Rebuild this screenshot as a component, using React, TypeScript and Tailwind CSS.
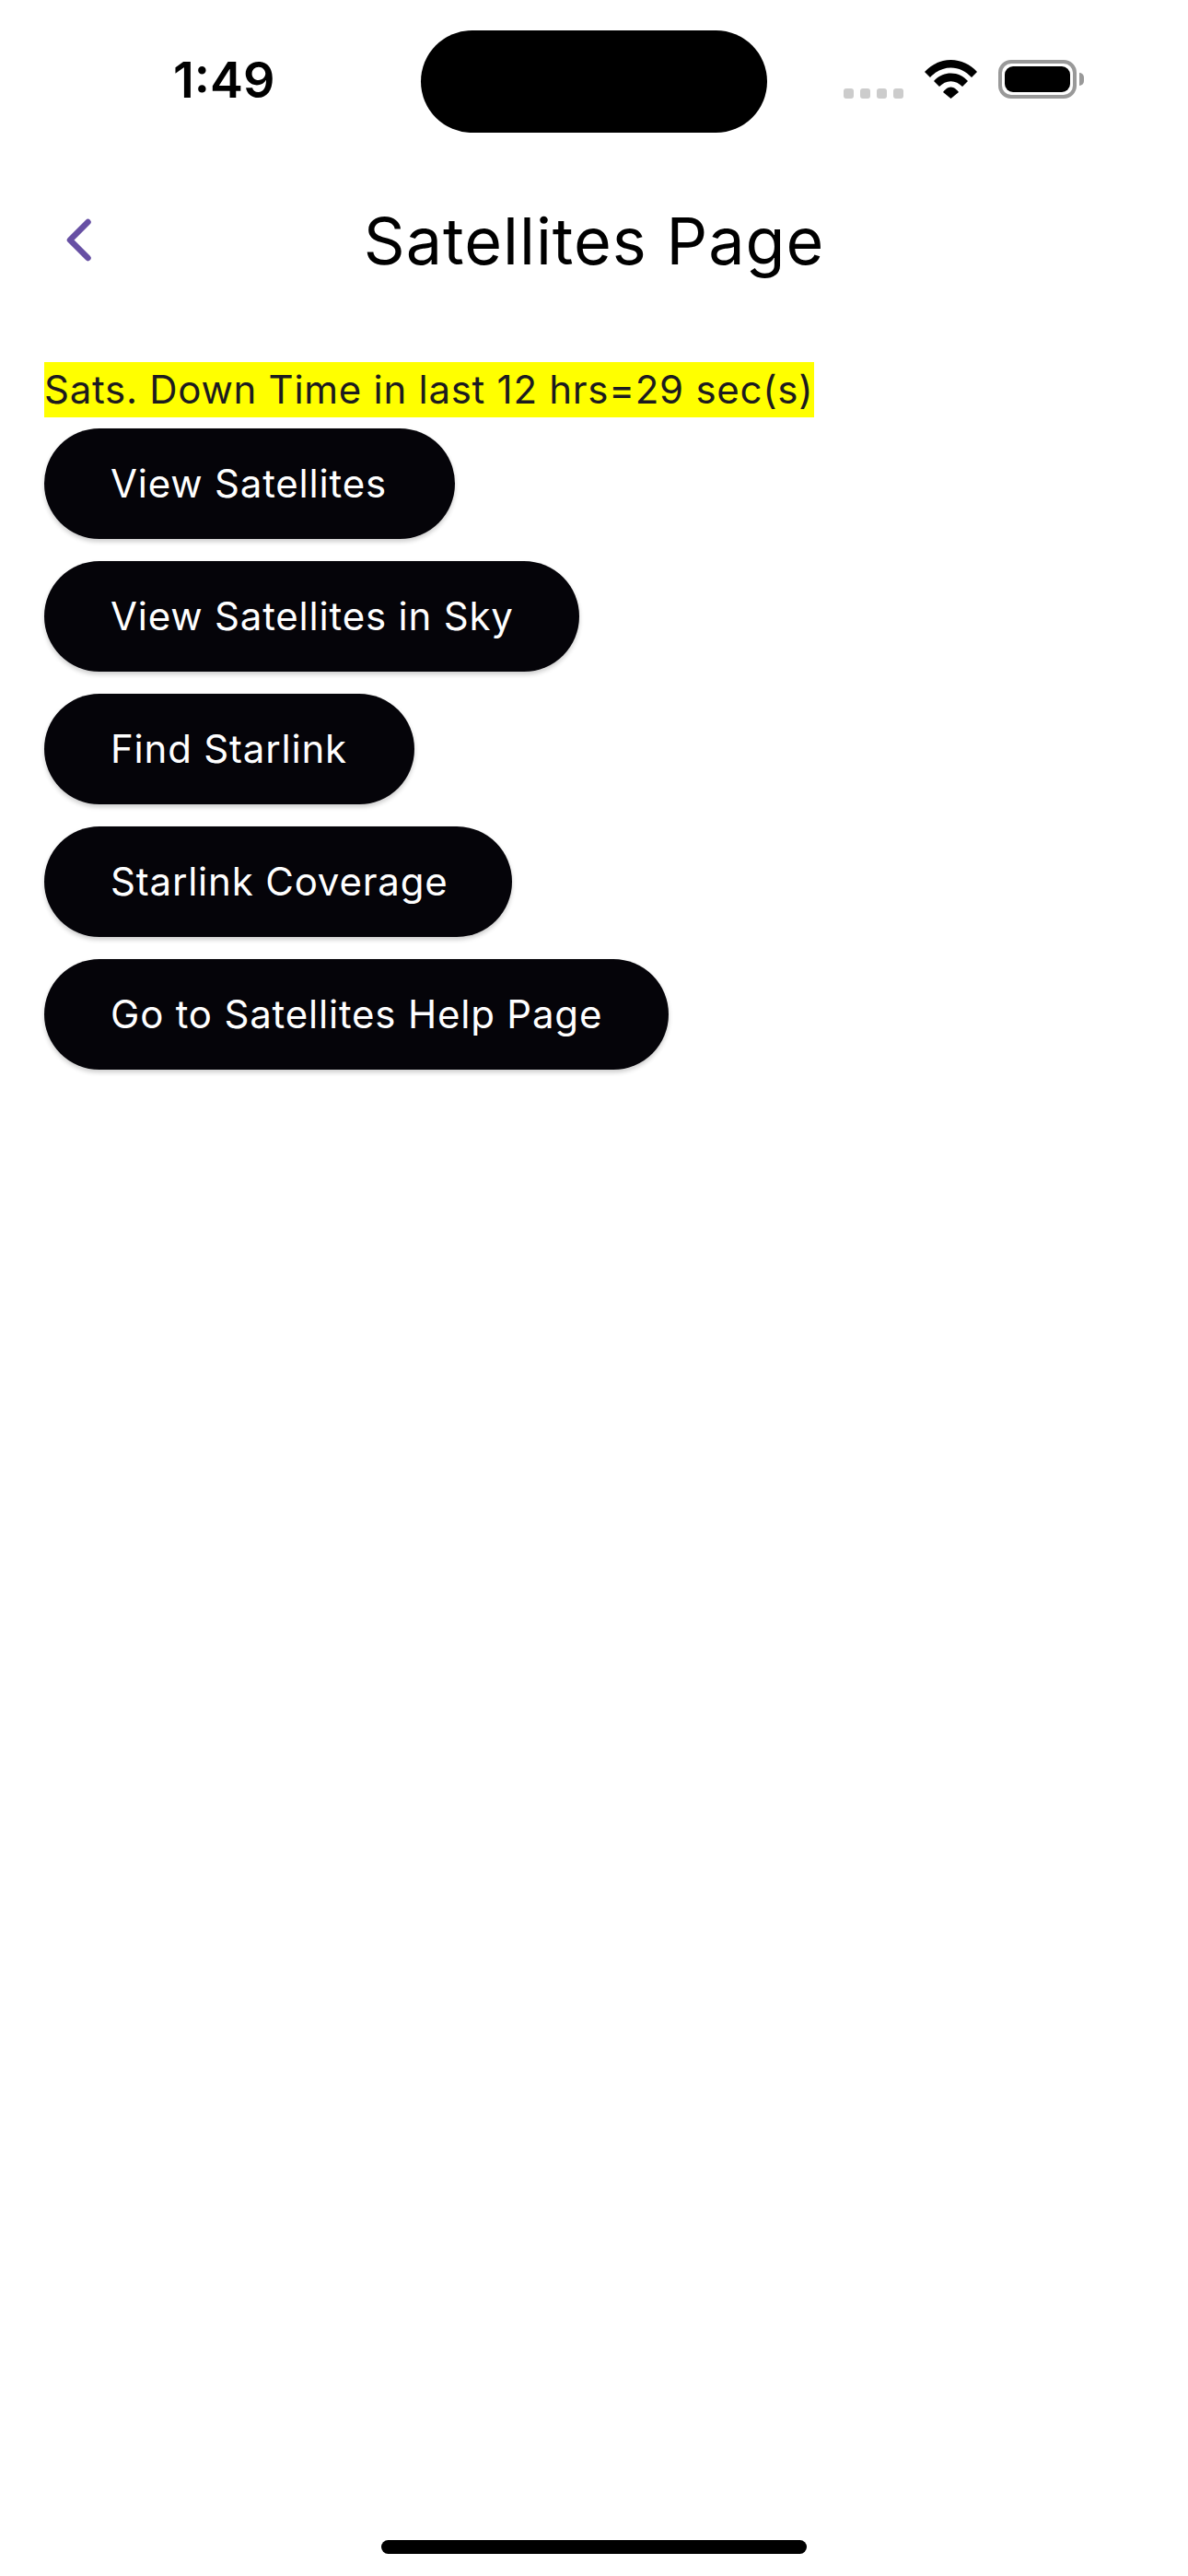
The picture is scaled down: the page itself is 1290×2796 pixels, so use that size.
const actions = [
  { label: "View Satellites", width: "w-[446px]" },
  { label: "View Satellites in Sky", width: "w-[581px]" },
  { label: "Find Starlink", width: "w-[402px]" },
  { label: "Starlink Coverage", width: "w-[508px]" },
  { label: "Go to Satellites Help Page", width: "w-[678px]" },
];

function WifiIcon() {
  return (
    <svg width="57" height="42" viewBox="0 0 57 42" className="block">
      <path d="M0 13C7.5 4.8 17.5 0 28.5 0S49.5 4.8 57 13L51 19C44.8 12.5 37 8.5 28.5 8.5S12.2 12.5 6 19Z" />
      <path d="M10 23C14.5 17.8 21 14.5 28.5 14.5S42.5 17.8 47 23L41 29C37.5 25.5 33.3 23.2 28.5 23.2S19.5 25.5 16 29Z" />
      <path d="M20 35C22 32.5 25 29.5 28.5 29.5S35 32.5 37 35L28.5 42Z" />
    </svg>
  );
}

function StatusBar() {
  return (
    <div className="flex h-[144px] items-start pt-[33px]">
      <div className="w-[457px] pt-[27px] pl-[188px]">
        <span className="block font-['Inter',sans-serif] text-[54px] leading-[54px] font-semibold text-black">
          1:49
        </span>
      </div>
      <div className="h-[111px] w-[376px] rounded-full bg-black" />
      <div className="flex h-[111px] items-end gap-[23px] pb-[37px] pl-[83px]">
        <div className="flex gap-[7px]">
          {[0, 1, 2, 3].map((i) => (
            <span key={i} className="h-[11px] w-[11px] rounded-[3px] bg-[#cccccc]" />
          ))}
        </div>
        <WifiIcon />
        <div className="flex items-center gap-[3px]">
          <div className="h-[42px] w-[85px] rounded-[14px] border-[4px] border-[#999999] p-[3px]">
            <div className="h-full w-full rounded-[9px] bg-black" />
          </div>
          <div className="h-[14px] w-[5px] rounded-r-full bg-[#999999]" />
        </div>
      </div>
    </div>
  );
}

export default function App() {
  return (
    <div className="flex h-[2796px] w-[1290px] flex-col bg-white font-['Inter',sans-serif]">
      <StatusBar />

      <div className="relative mt-[60px] flex h-[110px] items-center justify-center">
        <svg width="33" height="51" viewBox="0 0 33 51" fill="none" className="absolute top-[31px] left-[68px]">
          <path d="M27.5 6 L8 25.5 L27.5 45" stroke="#6750a4" strokeWidth="6.5" strokeLinecap="round" strokeLinejoin="round" />
        </svg>
        <h1 className="pt-[5px] text-[70px] leading-[84px] font-normal tracking-[1px] text-black">Satellites Page</h1>
      </div>

      <div className="mt-[79px] flex flex-col items-start px-[48px]">
        <div className="h-[60px] w-[836px] bg-[#ffff00] text-[42px] leading-[60px] tracking-[0.72px] whitespace-nowrap text-[#1c1b1f]">
          Sats. Down Time in last 12 hrs=29 sec(s)
        </div>
        <div className="mt-[12px] flex flex-col items-start gap-[24px]">
          {actions.map((a) => (
            <button
              key={a.label}
              className={`h-[120px] ${a.width} rounded-[60px] bg-[#050409] pl-[72px] text-left text-[42px] leading-[120px] font-normal tracking-[0.8px] whitespace-nowrap text-white shadow-[0_3px_5px_rgba(0,0,0,0.2)]`}
            >
              {a.label}
            </button>
          ))}
        </div>
      </div>

      <div className="mt-auto flex justify-center pb-[24px]">
        <div className="h-[15px] w-[462px] rounded-full bg-black" />
      </div>
    </div>
  );
}
